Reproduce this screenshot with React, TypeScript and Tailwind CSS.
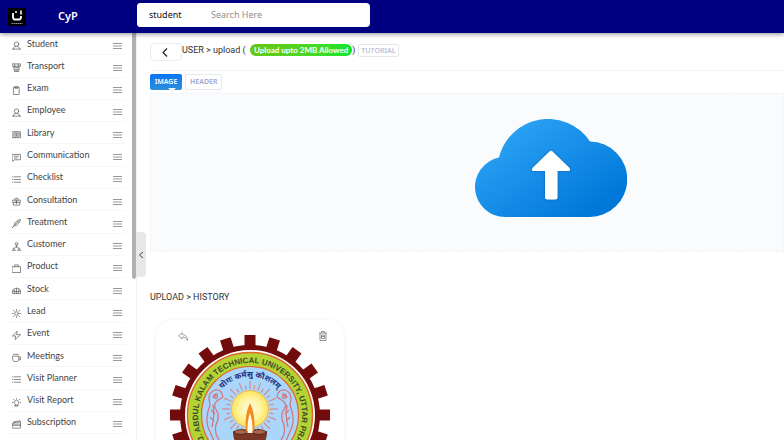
import React from "react";

type IconProps = { children: React.ReactNode };

function Line({ children }: IconProps) {
  return (
    <svg viewBox="0 0 20 20" className="size-[9px]" fill="none" stroke="currentColor" strokeWidth="1.7" strokeLinejoin="round" strokeLinecap="round">
      {children}
    </svg>
  );
}

const person = <Line><circle cx="10" cy="7" r="5" /><path d="M1 18h18M3 18c0-4 3-6 7-6s7 2 7 6" /></Line>;
const list = <Line><path d="M1 4h1M5 4h14M1 10h1M5 10h14M1 16h1M5 16h14" /></Line>;

const items: { label: string; icon: React.ReactNode }[] = [
  { label: "Student", icon: person },
  { label: "Transport", icon: <Line><path d="M1 2h18v5H1zM4 7l1 12h10l1-12M6 3v7h8V3M6 14h8M8 17h4" /></Line> },
  { label: "Exam", icon: <Line><path d="M4 3h12v16H4zM7 1h6v4H7z" /></Line> },
  { label: "Employee", icon: person },
  { label: "Library", icon: <Line><path d="M1 4h18v13H1zM7 4v13M13 4v13M4 7v7M10 7v7M16 7v7" /></Line> },
  { label: "Communication", icon: <Line><path d="M1 3h18v12H6l-5 3zM5 7h10M5 11h7" /></Line> },
  { label: "Checklist", icon: list },
  { label: "Consultation", icon: <Line><path d="M1 7h18v5H1zM3 12v6h14v-6M6 7l1-4h6l1 4M10 7v8M7 11h6" /></Line> },
  { label: "Treatment", icon: <Line><path d="M1 19l4-5 1-5 8-6 5-2-2 5-6 8-5 1zM5 14l8-7M13 4l3 3" /></Line> },
  { label: "Customer", icon: <Line><circle cx="10" cy="4" r="3" /><path d="M10 7v5M10 9l-5 5M10 9l5 5M1 18l3-5 3 5zM13 18l3-5 3 5z" /></Line> },
  { label: "Product", icon: <Line><path d="M1 6h18v13H1zM6 6V2h8v4" /></Line> },
  { label: "Stock", icon: <Line><path d="M1 16V12c1-5 4-7 9-7s8 2 9 7v4zM1 12h18M6 12v4M10 5v11M14 12v4M5 8v4M15 8v4" /></Line> },
  { label: "Lead", icon: <Line><circle cx="10" cy="10" r="4" /><path d="M10 1v2M10 17v2M1 10h2M17 10h2M3 3l2 2M15 15l2 2M17 3l-2 2M5 15l-2 2" /></Line> },
  { label: "Event", icon: <Line><path d="M11 1L1 11h7l-1 8L19 8h-8z" /></Line> },
  { label: "Meetings", icon: <Line><path d="M2 7h13v9l-2 3H4l-2-3zM15 9h4v6h-4M3 3h11" /></Line> },
  { label: "Visit Planner", icon: list },
  { label: "Visit Report", icon: <Line><path d="M7 14a5 5 0 1 1 6 0v4H7zM10 1v1M1 10h1M18 10h1M3 3l1 1M17 3l-1 1M7 16h6" /></Line> },
  { label: "Subscription", icon: <Line><path d="M1 9h18v9H1zM1 9l3-5 14-2 1 7M1 12h18M4 6l14-2" /></Line> },
];

function Header() {
  return (
    <header className="relative z-20 flex h-[33px] shrink-0 items-center bg-[#000080] shadow-[0_1px_5px_rgba(0,0,0,0.45)]">
      <div className="flex w-[137px] shrink-0 items-center pl-2">
        <svg viewBox="0 0 18 18" className="size-[18px]" role="img" aria-label="Logo">
          <rect width="18" height="18" fill="#000" />
          <path d="M5 5v4q0 2.500 2 2.500h4q2 0 2-2.500V8" fill="none" stroke="#fff" strokeWidth="1.800" />
          <path d="M13 2.500v4M7 4h2" stroke="#fff" strokeWidth="1.600" />
          <path d="M3.500 15.500h11" stroke="#999" strokeWidth="1" strokeDasharray="1.500 .5" />
        </svg>
        <span className="ml-8 text-[11px] font-semibold text-white">CyP</span>
      </div>
      <form className="mb-1 flex h-6 w-[233px] overflow-hidden rounded bg-white" onSubmit={(e) => e.preventDefault()}>
        <select aria-label="Search in" className="w-[67px] appearance-none bg-white pl-3 pt-px text-[9px] text-[#111] outline-none">
          <option>student</option>
        </select>
        <input aria-label="Search" placeholder="Search Here" className="min-w-0 flex-1 pl-[7px] pt-px text-[9px] outline-none placeholder:text-[#8c8f96]" />
      </form>
    </header>
  );
}

function Sidebar() {
  return (
    <aside className="relative w-[137px] shrink-0 border-r border-[#f0f0f0]">
      <nav className="flex h-full flex-col pb-1.5 pl-2 pr-2.5">
        {items.map((item) => (
          <a key={item.label} href="#" className="flex min-h-[22px] flex-1 items-center border-b border-[#f7f7f7] pl-1 text-[#444]">
            <span className="mt-1 w-[15px] text-[#666]">{item.icon}</span>
            <span className="flex-1 font-['Lato'] text-[9px] leading-3">{item.label}</span>
            <svg viewBox="0 0 9 6" className="mr-1 mt-1 h-1.5 w-[9px]" stroke="#999" strokeWidth="1">
              <path d="M0 .5h9M0 3h9M0 5.500h9" />
            </svg>
          </a>
        ))}
      </nav>
      <div className="absolute right-0 top-0 h-[246px] w-1 rounded-b bg-[#b1b1b1]" />
      <button aria-label="Collapse menu" className="absolute -right-2.5 top-[199px] flex h-[45px] w-2.5 items-center justify-center rounded-r bg-[#e8e8e8] text-[#444]">
        <svg viewBox="0 0 6 8" className="h-2 w-1.5" fill="none" stroke="currentColor"><path d="M5 1L1.500 4 5 7" /></svg>
      </button>
    </aside>
  );
}

function Cloud() {
  return (
    <svg viewBox="0 0 152 98" className="h-[98px] w-[152px]">
      <defs>
        <linearGradient id="sky" x1="0" y1="0" x2="1" y2="1">
          <stop offset="0.1" stopColor="#2fa5f7" />
          <stop offset="0.85" stopColor="#0078d9" />
        </linearGradient>
        <filter id="soft" x="-30%" y="-30%" width="160%" height="160%">
          <feDropShadow dx="0" dy="0" stdDeviation="1.500" floodColor="#003b80" floodOpacity="0.5" />
        </filter>
      </defs>
      <path fill="url(#sky)" d="M30 98A30 30 0 0 1 24 38.600A50.400 50.400 0 0 1 115 22.500A37.750 37.750 0 0 1 114 98Z" />
      <path filter="url(#soft)" fill="#fff" d="M74.500 32.500q1.500-1.500 3 0l17 16.500q1.500 3-1 3H82.500v26q0 2.500-2.500 2.500h-7.500q-2.500 0-2.500-2.500V52H58.500q-2.500 0-1-3z" />
    </svg>
  );
}

const teeth = Array.from({ length: 20 }, (_, i) => i * 18);
const rays = Array.from({ length: 32 }, (_, i) => i * 11.25);

function Seal() {
  return (
    <svg viewBox="-81 -81 162 162" className="block w-full" role="img" aria-label="University seal">
      <defs>
        <path id="rim" d="M0 52A52 52 0 1 1 .1 52" />
        <path id="motto" d="M-38 0A38 38 0 0 1 38 0" />
        <radialGradient id="glow">
          <stop offset="0" stopColor="#fffbe0" />
          <stop offset="0.6" stopColor="#fff3a0" />
          <stop offset="1" stopColor="#fde25a" />
        </radialGradient>
      </defs>
      {teeth.map((a) => (
        <rect key={a} x="-5.500" y="-80" width="11" height="13" fill="#720b0b" transform={`rotate(${a})`} />
      ))}
      <circle r="70" fill="#720b0b" />
      <circle r="65" fill="#fff" />
      <circle r="62.500" fill="#b5d433" stroke="#e0662c" strokeWidth="1.500" />
      <circle r="48.500" fill="#abd6fb" stroke="#e0662c" strokeWidth="1.200" />
      <text className="font-['Liberation_Sans'] text-[8px] font-bold" fill="#3b4a2c">
        <textPath href="#rim" startOffset="49%" textAnchor="middle">DR. A.P.J. ABDUL KALAM TECHNICAL UNIVERSITY, UTTAR PRADESH</textPath>
      </text>
      <text className="text-[8px] font-bold" fill="#23307f">
        <textPath href="#motto" startOffset="50%" textAnchor="middle">योगः कर्मसु कौशलम्</textPath>
      </text>
      <g transform="translate(0 -6)">
        {rays.map((a, i) => (
          <path key={a} d={i % 2 ? "M0-20V-24" : "M0-20V-28"} stroke="#dc7d77" strokeWidth="1" transform={`rotate(${a})`} />
        ))}
        <circle r="18.500" fill="url(#glow)" stroke="#e9b85a" strokeWidth="1" />
      </g>
      {[1, -1].map((s) => (
        <g key={s} transform={`scale(${s} 1)`} fill="none" stroke="#d2787f" strokeWidth="1.300">
          <path d="M27-18q1-8 8-7 6 2 6 9l-1 6q5 12 2 22l-6 14M27-18l6 4q5 4 0 10-3 6 1 14 2 8-3 15" />
          <path d="M32-21q4-1 5 4M37-10q-2 10 1 22M35-1l4-4M36 6l4-4" />
          <circle cx="34" cy="-18" r="1.500" />
        </g>
      ))}
      <path d="M-17 17q17-6 34 0q0 16-17 18q-17-2-17-18z" fill="#7a3524" />
      <path d="M-17 17q8-5 16 0-8 5-16 0M1 17q8-5 16 0-8 5-16 0" fill="#a8674a" stroke="#4b1c14" strokeWidth="0.8" />
      <path d="M0-12Q6 0 4 16H-4Q-6 0 0-12z" fill="#f28a1c" />
      <path d="M0-2Q3 6 2.500 18H-2.500Q-3 6 0-2z" fill="#fffbe8" />
    </svg>
  );
}

export default function App() {
  return (
    <div className="flex h-screen flex-col overflow-hidden bg-white font-['Noto_Sans',sans-serif] text-[#333]">
      <Header />
      <div className="flex min-h-0 flex-1">
        <Sidebar />
        <main className="min-w-0 flex-1 pl-[13px] pt-2">
          <div className="flex h-[30px] items-start border-b border-[#f4f4f4]">
            <button aria-label="Back" className="mt-0.5 flex h-[18px] w-8 items-center justify-center rounded border border-[#e9ebee]">
              <svg viewBox="0 0 6 9" className="mr-0.5 h-[9px] w-1.5" fill="none" stroke="#222" strokeWidth="1.200"><path d="M5 .5L1 4.500 5 8.500" /></svg>
            </button>
            <h1 className="whitespace-nowrap font-['Roboto'] text-[9px] leading-[18px]">
              USER &gt; upload ({" "}
              <span className="ml-0.5 rounded-full bg-linear-to-r from-[#66c613] to-[#00e62e] px-1 py-px font-['Lato'] text-[8px] font-bold text-white">Upload upto 2MB Allowed</span>
              )
            </h1>
            <button className="ml-[3px] mt-[3px] h-[13px] rounded-xs border border-[#e6e8f0] px-0.5 text-[7px] font-semibold leading-[11px] text-[#bcc1d6]">TUTORIAL</button>
          </div>
          <div className="mt-[3px] flex gap-[3px] text-[7px] font-semibold">
            <button className="relative h-4 w-8 rounded-xs bg-linear-to-b from-[#0a75f5] to-[#2b8fd8] text-white">
              IMAGE
              <span className="absolute -bottom-0.5 right-1.5 border-x-4 border-t-4 border-x-transparent border-t-[#f2f4f7]" />
            </button>
            <button className="h-4 rounded-xs border border-[#e6e8f0] px-1 text-[#a0a6d0]">HEADER</button>
          </div>
          <label className="mt-[3px] flex h-[159px] items-center justify-center border border-dashed border-[#f2f4f7] bg-[#fafbfd] pb-2.5 pl-[168px]">
            <input type="file" className="sr-only" aria-label="Upload image" />
            <Cloud />
          </label>
          <h2 className="mt-[39px] font-['Roboto'] text-[9px] leading-3">UPLOAD &gt; HISTORY</h2>
          <article className="relative ml-1.5 mt-[17px] w-[188px] rounded-2xl px-[13px] pb-3 pt-[14px] shadow-[0_0_5px_rgba(0,0,0,0.06)]">
            <Seal />
            <button aria-label="Restore" className="absolute left-[22px] top-3">
              <svg viewBox="0 0 20 18" className="h-[9px] w-[10px]" fill="none" stroke="#888" strokeWidth="1.600" strokeLinejoin="round"><path d="M8 1L1 8l7 6v-4c6 0 8 2 11 7 0-8-4-12-11-12z" /></svg>
            </button>
            <button aria-label="Delete" className="absolute right-[17px] top-[11px]">
              <svg viewBox="0 0 16 20" className="h-[10px] w-2" fill="none" stroke="#777" strokeWidth="1.600"><path d="M0 4h16M5 4V1h6v3M2 4v15h12V4M5 8h6v7H5zM5 11h6" /></svg>
            </button>
          </article>
        </main>
      </div>
    </div>
  );
}
